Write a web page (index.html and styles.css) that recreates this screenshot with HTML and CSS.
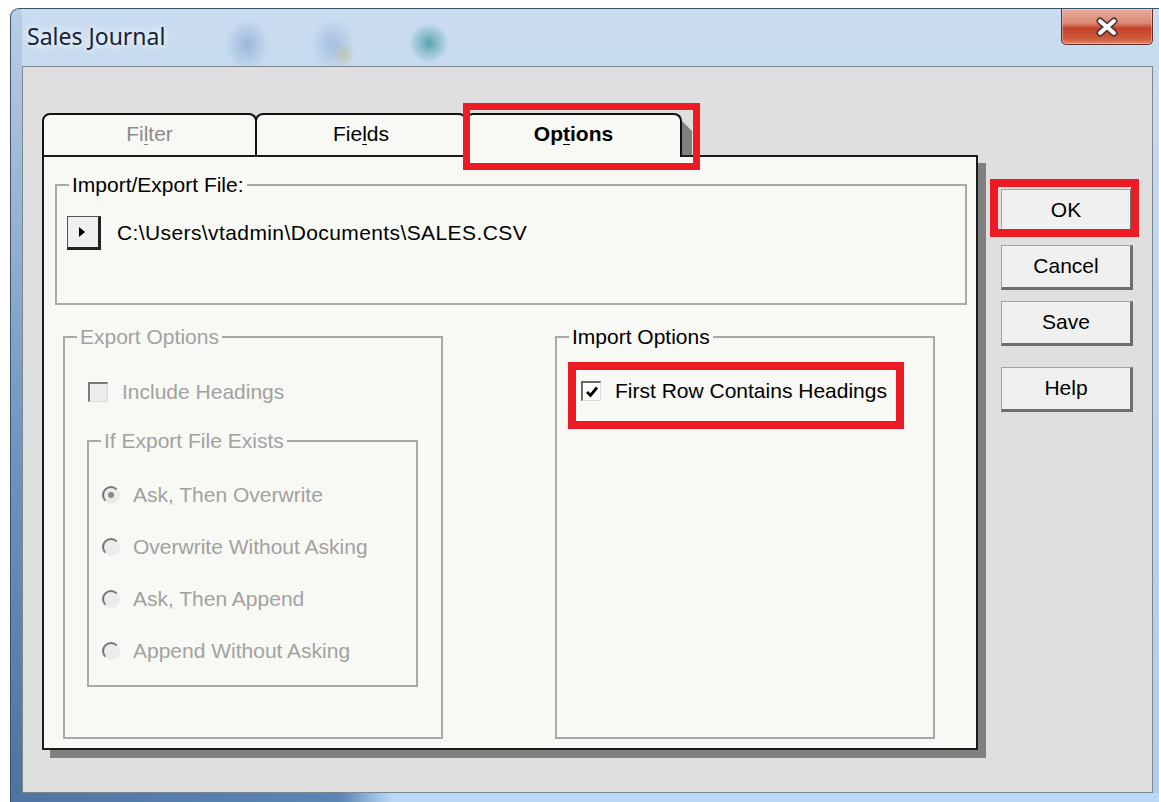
FILE: index.html
```html
<!DOCTYPE html>
<html lang="en">
<head>
<meta charset="utf-8">
<title>Sales Journal</title>
<link rel="stylesheet" href="styles.css">
</head>
<body>
<div class="window">
  <div class="titlebar">
    <div class="title">Sales Journal</div>
    <button class="close-btn" aria-label="Close">
      <svg width="26" height="20" viewBox="0 0 26 20">
        <path d="M6 4 L20 16 M20 4 L6 16" stroke="#4a3434" stroke-width="7" stroke-linecap="round"/>
        <path d="M6 4 L20 16 M20 4 L6 16" stroke="#ffffff" stroke-width="4" stroke-linecap="round"/>
      </svg>
    </button>
  </div>

  <div class="client">
    <div class="tabset">
      <div class="tabs">
        <div class="tab tab-disabled">Fi<u>l</u>ter</div>
        <div class="tab">Fie<u>l</u>ds</div>
        <div class="tab tab-active">Op<u>t</u>ions<span class="mark mark-tab"></span></div>
      </div>

      <div class="panel">
        <fieldset class="group file-group">
          <legend>Import/Export File:</legend>
          <div class="file-row">
            <span class="arrow-btn">
              <svg width="8" height="12" viewBox="0 0 8 12"><path d="M1 1 L7 6 L1 11 Z" fill="#000"/></svg>
            </span>
            <span class="file-path">C:\Users\vtadmin\Documents\SALES.CSV</span>
          </div>
        </fieldset>

        <div class="option-row">
          <fieldset class="group export-group">
            <legend>Export Options</legend>
            <div class="check-row">
              <span class="check"></span>
              <span class="check-label">Include Headings</span>
            </div>
            <fieldset class="group exists-group">
              <legend>If Export File Exists</legend>
              <div class="radio-row"><span class="radio radio-on"></span><span>Ask, Then Overwrite</span></div>
              <div class="radio-row"><span class="radio"></span><span>Overwrite Without Asking</span></div>
              <div class="radio-row"><span class="radio"></span><span>Ask, Then Append</span></div>
              <div class="radio-row"><span class="radio"></span><span>Append Without Asking</span></div>
            </fieldset>
          </fieldset>

          <fieldset class="group import-group">
            <legend>Import Options</legend>
            <div class="check-row">
              <span class="check check-on">
                <svg width="14" height="14" viewBox="0 0 14 14"><path d="M2 7 L5.5 10.5 L12 2.5" fill="none" stroke="#000" stroke-width="2.8"/></svg>
              </span>
              <span class="check-label">First Row Contains Headings</span>
              <span class="mark mark-check"></span>
            </div>
          </fieldset>
        </div>
      </div>
    </div>

    <div class="buttons">
      <button class="btn">OK<span class="mark mark-ok"></span></button>
      <button class="btn">Cancel</button>
      <button class="btn">Save</button>
      <button class="btn btn-help">Help</button>
    </div>
  </div>
</div>
</body>
</html>
```

FILE: styles.css
```css
* {
  box-sizing: border-box;
}

html,
body {
  margin: 0;
  padding: 0;
  background: #ffffff;
}

body {
  width: 1159px;
  height: 802px;
  overflow: hidden;
  font-family: "Liberation Sans", Arial, sans-serif;
  font-size: 21px;
  color: #000;
}

/* ---------- window frame ---------- */
.window {
  margin: 8px 0 0 10px;
  width: 1149px;
  height: 794px;
  border-top: 1px solid #3e516b;
  border-left: 1px solid #3e516b;
  border-radius: 9px 0 0 0;
  display: flex;
  flex-direction: column;
  background:
    radial-gradient(ellipse 22px 26px at 236px 36px, rgba(95, 135, 195, 0.42), transparent),
    radial-gradient(ellipse 22px 26px at 322px 36px, rgba(105, 145, 200, 0.38), transparent),
    radial-gradient(circle 12px at 333px 46px, rgba(205, 195, 95, 0.45), transparent),
    radial-gradient(circle 20px at 418px 34px, rgba(40, 140, 150, 0.7), transparent),
    linear-gradient(to right, #4f76a3 0, #5d85b3 330px, #b8d8f6 380px, #b8d8f6 100%) bottom / 100% 9px no-repeat,
    linear-gradient(#b8cee6, #6f95c0 55%, #4d729e) left / 11px 100% no-repeat,
    linear-gradient(#c9dcf0, #bcd4ec 45%, #b2cde9);
}

.titlebar {
  height: 57px;
  display: flex;
  justify-content: space-between;
  align-items: flex-start;
}

.title {
  margin: 12px 0 0 16px;
  font-family: "Noto Sans", "Open Sans", sans-serif;
  font-size: 23px;
  line-height: 30px;
  color: #16243f;
  text-shadow: 0 0 6px rgba(255, 255, 255, 0.95), 0 0 12px rgba(255, 255, 255, 0.8);
}

.close-btn {
  margin: 0 6px 0 0;
  width: 92px;
  height: 36px;
  padding: 0;
  border: 1px solid #5d2f27;
  border-top: none;
  border-radius: 0 0 5px 5px;
  display: flex;
  align-items: center;
  justify-content: center;
  background: linear-gradient(#e8ab9c 0%, #dc8a76 40%, #c2422a 55%, #cf5a3a 85%, #e2866a 100%);
  box-shadow: inset 0 0 0 1px rgba(255, 220, 210, 0.45);
}

/* ---------- client area ---------- */
.client {
  margin-left: 11px;
  width: 1131px;
  height: 727px;
  border: 1px solid #7c8590;
  background: #dfdfdf;
  display: flex;
  align-items: flex-start;
  padding: 46px 0 0 19px;
}

.tabset {
  width: 936px;
  display: flex;
  flex-direction: column;
}

.tabs {
  display: flex;
  align-items: flex-end;
  height: 42px;
}

.tab {
  position: relative;
  height: 42px;
  border: 2px solid #111;
  border-bottom: none;
  border-radius: 8px 8px 0 0;
  background: #f8f8f4;
  display: flex;
  align-items: center;
  justify-content: center;
  padding-bottom: 2px;
  font-size: 21px;
}

.tab:nth-child(1) {
  width: 215px;
}

.tab:nth-child(2) {
  width: 212px;
  margin-left: -2px;
}

.tab:nth-child(3) {
  width: 217px;
  margin-left: -2px;
}

.tab u {
  text-decoration-thickness: 1px;
  text-underline-offset: 3px;
}

.tab-disabled {
  color: #8c8c8c;
}

.tab-active {
  height: 44px;
  margin-bottom: -2px;
  z-index: 2;
  font-weight: bold;
  padding-bottom: 4px;
}

/* drop shadow on the right side of the raised tab */
.tab-active::after {
  content: "";
  position: absolute;
  right: -12px;
  top: 6px;
  bottom: 2px;
  width: 10px;
  background: #808080;
  clip-path: polygon(0 0, 100% 10px, 100% 100%, 0 100%);
}

.panel {
  position: relative;
  z-index: 1;
  height: 595px;
  border: 2px solid #1b1b1b;
  background: #f8f8f4;
  box-shadow: 8px 8px 0 #808080;
  padding: 16px 9px 9px 11px;
  display: flex;
  flex-direction: column;
}

/* ---------- group boxes ---------- */
.group {
  margin: 0;
  padding: 0;
  min-width: 0;
  border: 2px solid #a9a9a9;
}

.group legend {
  margin-left: 12px;
  padding: 0 3px;
  line-height: 24px;
  font-size: 21px;
}

.file-group {
  height: 132px;
  padding-top: 19px;
}

.file-row {
  display: flex;
  align-items: center;
  margin-left: 10px;
}

.arrow-btn {
  width: 34px;
  height: 34px;
  border-top: 1px solid #555;
  border-left: 1px solid #555;
  border-right: 3px solid #222;
  border-bottom: 3px solid #222;
  background: #efefef;
  display: flex;
  align-items: center;
  justify-content: center;
  padding-right: 2px;
}

.file-path {
  margin-left: 16px;
  letter-spacing: 0.4px;
  line-height: 24px;
}

.option-row {
  flex: 1;
  display: flex;
  margin-top: 20px;
  padding-left: 8px;
  gap: 112px;
}

.export-group,
.import-group {
  width: 380px;
}

.export-group {
  padding-top: 31px;
  color: #a2a2a2;
}

.export-group > .check-row {
  margin-left: 23px;
}

.import-group {
  padding-top: 30px;
}

.import-group > .check-row {
  margin-left: 24px;
}

.check-row {
  position: relative;
  display: flex;
  align-items: center;
  height: 24px;
}

.check {
  width: 20px;
  height: 20px;
  border-top: 2px solid #7a7a7a;
  border-left: 2px solid #7a7a7a;
  border-right: 1px solid #dcdcdc;
  border-bottom: 1px solid #dcdcdc;
  background: #ececec;
  display: flex;
  align-items: center;
  justify-content: center;
}

.check-on {
  background: #ffffff;
  border-top-color: #6a6a6a;
  border-left-color: #6a6a6a;
}

.check-label {
  margin-left: 14px;
}

.exists-group {
  margin: 25px 0 0 22px;
  width: 331px;
  height: 258px;
  padding-top: 30px;
  display: flex;
  flex-direction: column;
  gap: 28px;
}

.radio-row {
  display: flex;
  align-items: center;
  height: 24px;
  margin-left: 13px;
}

.radio {
  width: 18px;
  height: 18px;
  border-radius: 50%;
  border: 2px solid transparent;
  border-top-color: #777;
  border-left-color: #777;
  background: #ececec;
  margin-right: 13px;
  display: flex;
  align-items: center;
  justify-content: center;
}

.radio-on::before {
  content: "";
  width: 6px;
  height: 6px;
  border-radius: 50%;
  background: #8a8a8a;
}

/* ---------- command buttons ---------- */
.buttons {
  margin: 76px 0 0 23px;
  display: flex;
  flex-direction: column;
  gap: 11px;
}

.btn {
  position: relative;
  width: 132px;
  height: 45px;
  padding: 0 0 2px;
  font-family: "Liberation Sans", Arial, sans-serif;
  font-size: 21px;
  color: #000;
  background: #f0f0f0;
  border-top: 1px solid #a4a4a4;
  border-left: 1px solid #a4a4a4;
  border-right: 3px solid #6e6e6e;
  border-bottom: 3px solid #6e6e6e;
}

.btn-help {
  margin-top: 10px;
}

/* ---------- red call-out frames ---------- */
.mark {
  position: absolute;
  border: 7px solid #ed1c24;
  pointer-events: none;
}

.mark-tab {
  left: -4px;
  top: -12px;
  right: -20px;
  bottom: -13px;
}

.mark-ok {
  left: -12px;
  top: -11px;
  right: -9px;
  bottom: -6px;
  border-width: 8px;
}

.mark-check {
  left: -13px;
  top: -17px;
  right: 29px;
  bottom: -26px;
  border-width: 8px;
}
```
